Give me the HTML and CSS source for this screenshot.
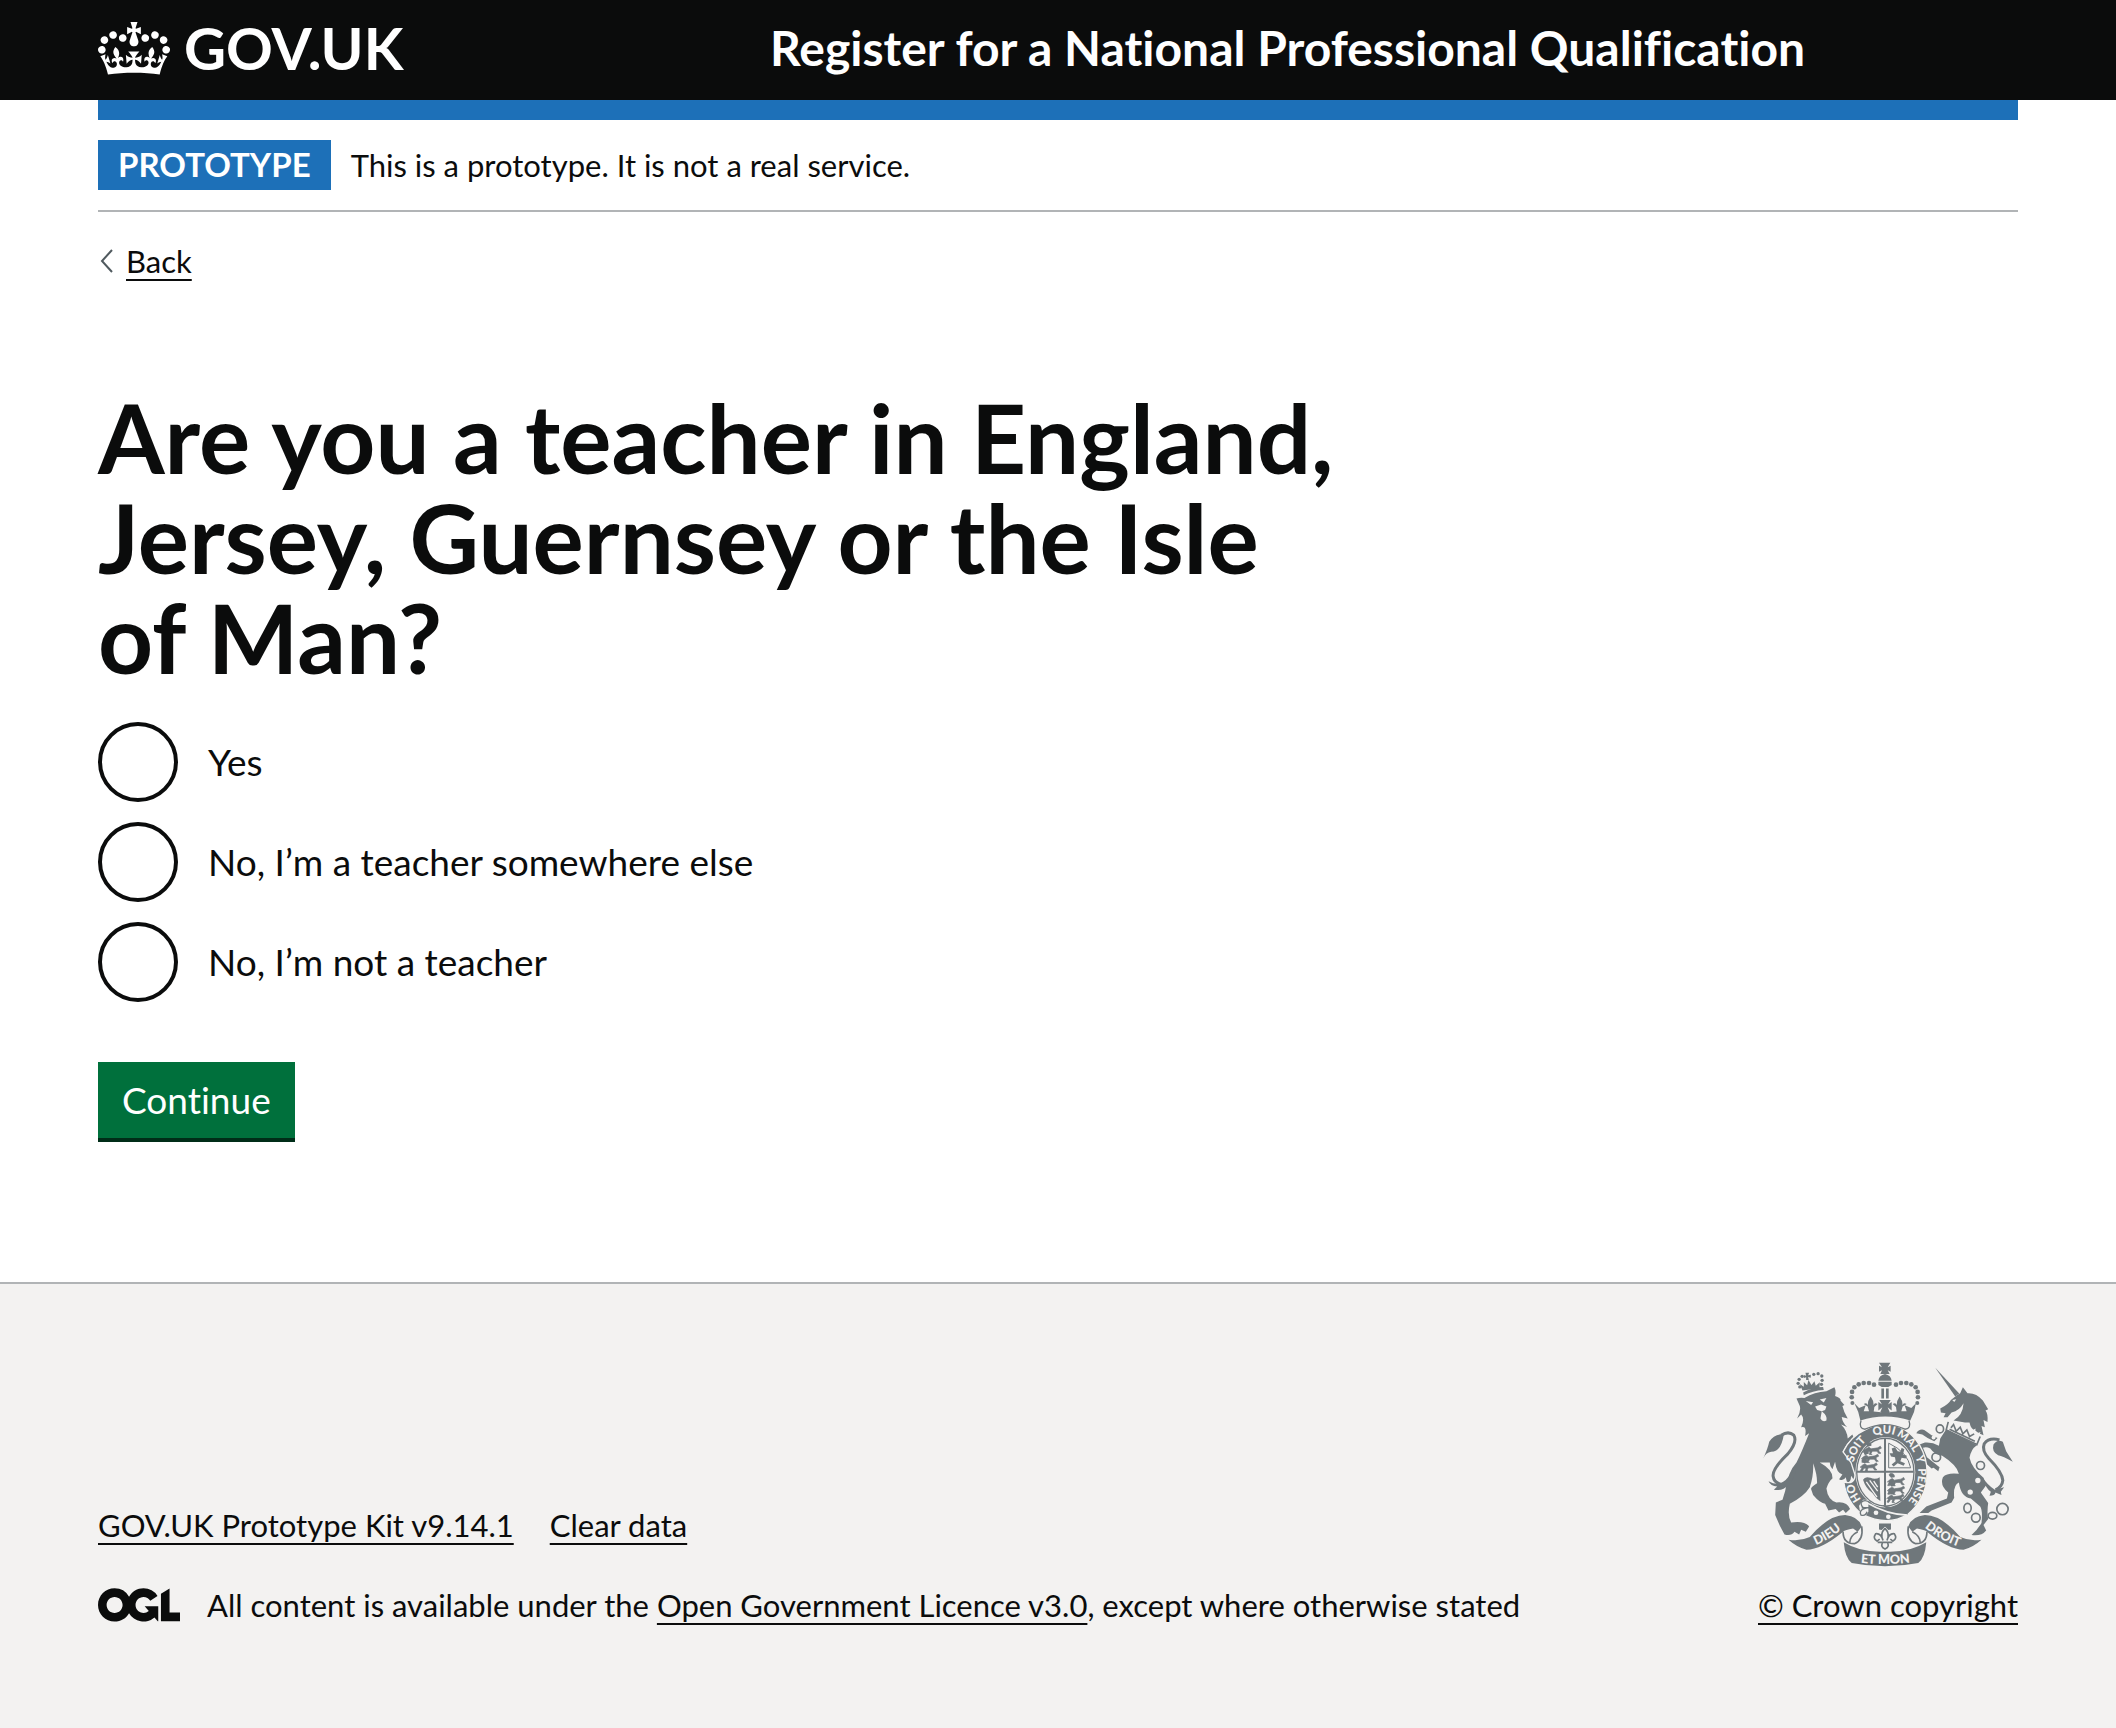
FILE: index.html
```html
<!DOCTYPE html>
<html lang="en">
<head>
<meta charset="utf-8">
<meta name="viewport" content="width=device-width, initial-scale=1">
<title>Are you a teacher in England, Jersey, Guernsey or the Isle of Man?</title>
<link rel="stylesheet" href="styles.css">
</head>
<body>
<header class="header">
  <div class="container header-row">
    <a class="logo" href="#">
      <svg class="logo-crown" viewBox="0 0 132 97" aria-hidden="true"><path fill="currentColor" fill-rule="evenodd" d="M25 30.2c3.5 1.5 7.7-.2 9.1-3.7 1.5-3.6-.2-7.8-3.9-9.2-3.6-1.4-7.6.3-9.1 3.9-1.4 3.5.3 7.5 3.9 9zM9 39.5c3.6 1.5 7.8-.2 9.2-3.7 1.5-3.6-.2-7.8-3.9-9.1-3.6-1.5-7.6.2-9.1 3.8-1.4 3.5.3 7.5 3.8 9zM4.4 57.2c3.5 1.5 7.7-.2 9.1-3.8 1.5-3.6-.2-7.7-3.9-9.1-3.5-1.5-7.6.3-9.1 3.8-1.4 3.5.3 7.6 3.9 9.1zm38.3-21.4c3.5 1.5 7.7-.2 9.1-3.8 1.5-3.6-.2-7.7-3.9-9.1-3.6-1.5-7.6.3-9.1 3.8-1.3 3.6.4 7.7 3.9 9.1zm64.4-5.6c-3.6 1.5-7.8-.2-9.1-3.7-1.5-3.6.2-7.8 3.8-9.2 3.6-1.4 7.7.3 9.2 3.9 1.3 3.5-.4 7.5-3.9 9zm15.9 9.3c-3.6 1.5-7.7-.2-9.1-3.7-1.5-3.6.2-7.8 3.7-9.1 3.6-1.5 7.7.2 9.2 3.8 1.5 3.5-.3 7.5-3.8 9zm4.7 17.7c-3.6 1.5-7.8-.2-9.2-3.8-1.5-3.6.2-7.7 3.9-9.1 3.6-1.5 7.7.3 9.2 3.8 1.3 3.5-.4 7.6-3.9 9.1zM89.3 35.8c-3.6 1.5-7.8-.2-9.2-3.8-1.4-3.6.2-7.7 3.9-9.1 3.6-1.5 7.7.3 9.2 3.8 1.4 3.6-.3 7.7-3.9 9.1zM69.7 17.7l8.9 4.7V9.3l-8.9 2.8c-.2-.3-.5-.6-.9-.9L72.4 0H59.6l3.5 11.2c-.3.3-.6.5-.9.9l-8.8-2.8v13.1l8.8-4.7c.3.3.6.7.9.9l-5 15.4v.1c-.2.8-.4 1.6-.4 2.4 0 4.1 3.1 7.5 7 8.1h.2c.3 0 .7.1 1 .1.4 0 .7 0 1-.1h.2c4-.6 7.1-4.1 7.1-8.1 0-.8-.1-1.7-.4-2.4V34l-5.1-15.4c.4-.2.7-.6 1-.9zM66 92.8c16.9 0 32.8 1.1 47.1 3.2 4-16.9 8.9-26.7 14-33.5l-9.6-3.4c1 4.9 1.1 7.2 0 10.2-1.5-1.4-3-4.3-4.2-8.7L108.6 76c2.8-2 5-3.2 7.5-3.3-4.4 9.4-10 11.9-13.6 11.2-4.3-.8-6.3-4.6-5.6-7.9 1-4.7 5.7-5.9 8-.5 4.3-8.7-3-11.4-7.6-8.8 7.1-7.2 7.9-13.5 2.1-21.1-8 6.1-8.1 12.3-4.5 20.8-4.7-5.4-12.1-2.5-9.5 6.2 3.4-5.2 7.9-2 7.2 3.1-.6 4.3-6.4 7.8-13.5 7.2-10.3-.9-10.9-8-11.2-13.8 2.5-.5 7.1 1.8 11 7.3L80.2 60c-4.1 4.4-8 5.3-12.3 5.4 1.4-4.4 8-11.6 8-11.6H55.5s6.4 7.2 7.9 11.6c-4.2-.1-8-1-12.3-5.4l1.4 16.4c3.9-5.5 8.5-7.7 10.9-7.3-.3 5.8-.9 12.8-11.1 13.8-7.2.6-12.9-2.9-13.5-7.2-.7-5 3.8-8.3 7.1-3.1 2.7-8.7-4.6-11.6-9.4-6.2 3.7-8.5 3.6-14.7-4.6-20.8-5.8 7.6-5 13.9 2.2 21.1-4.7-2.6-11.9.1-7.7 8.8 2.3-5.5 7.1-4.2 8.1.5.7 3.3-1.3 7.1-5.7 7.9-3.5.7-9-1.8-13.5-11.2 2.5.1 4.7 1.3 7.5 3.3l-4.7-15.4c-1.2 4.4-2.7 7.2-4.3 8.7-1.1-3-.9-5.3 0-10.2l-9.5 3.4c5 6.9 9.9 16.7 14 33.5 14.8-2.1 30.8-3.2 47.7-3.2z"/></svg>
      <span>GOV.UK</span>
    </a>
    <a class="service-name" href="#">Register for a National Professional Qualification</a>
  </div>
</header>

<div class="container">
  <div class="blue-bar"></div>
  <div class="phase-banner">
    <strong class="tag">PROTOTYPE</strong>
    <span>This is a prototype. It is not a real service.</span>
  </div>
  <a class="back-link" href="#">
    <svg class="back-arrow" viewBox="0 0 16 24" aria-hidden="true"><path d="M14 1 4 12l10 11" fill="none" stroke="currentColor" stroke-width="2"/></svg>
    <span class="link">Back</span>
  </a>
  <main class="main">
    <form>
      <fieldset class="fieldset">
        <legend class="legend"><h1 class="heading">Are you a teacher in England, Jersey, Guernsey or the Isle of Man?</h1></legend>
        <div class="radios">
          <div class="radio-item"><input class="radio" type="radio" id="yes" name="teacher"><label for="yes">Yes</label></div>
          <div class="radio-item"><input class="radio" type="radio" id="elsewhere" name="teacher"><label for="elsewhere">No, I’m a teacher somewhere else</label></div>
          <div class="radio-item"><input class="radio" type="radio" id="no" name="teacher"><label for="no">No, I’m not a teacher</label></div>
        </div>
      </fieldset>
      <button class="button" type="button">Continue</button>
    </form>
  </main>
</div>

<footer class="footer">
  <div class="container footer-row">
    <div class="footer-meta">
      <nav class="footer-links"><a class="link" href="#">GOV.UK Prototype Kit v9.14.1</a><a class="link" href="#">Clear data</a></nav>
      <div class="licence">
        <svg class="ogl" viewBox="0 0 483 196" aria-hidden="true"><path fill="currentColor" d="M421.5 142.8V.1l-50.7 32.3v161.1h112.4v-50.7zm-122.3-9.6A47.12 47.12 0 0 1 221 97.8c0-26 21.1-47.1 47.1-47.1 16.7 0 31.4 8.7 39.7 21.8l42.7-27.2A97.63 97.63 0 0 0 268.1 0c-36.5 0-68.3 20.1-85.1 49.7A98 98 0 0 0 97.8 0C43.9 0 0 43.9 0 97.8s43.9 97.8 97.8 97.8c36.5 0 68.3-20.1 85.1-49.7a97.76 97.76 0 0 0 149.6 25.4l19.4 22.2h3v-87.8h-80l24.3 27.5zM97.8 145c-26 0-47.1-21.1-47.1-47.1s21.1-47.1 47.1-47.1 47.1 21.1 47.1 47.1S123.8 145 97.8 145"/></svg>
        <span>All content is available under the <a class="link" href="#">Open Government Licence v3.0</a>, except where otherwise stated</span>
      </div>
    </div>
    <div class="copyright">
      <svg class="crest" viewBox="66 70 750 616" aria-hidden="true">
        <defs>
          <path id="garter-line" d="M433 521A99 118 0 0 1 433 285A99 118 0 0 1 433 521"/>
          <path id="dieu-line" d="M208 626Q268 606 314 561"/>
          <path id="mon-line" d="M340 671Q433 684 526 670"/>
          <path id="droit-line" d="M543 560Q594 606 664 628"/>
          <path id="passant" d="M0 4l8-4 6 5 20-3 8-5 3 6-8 4 1 6 6 5-7 1-5-7-14 0-4 7 3 3-8 0 2-9-6 0-6 9-5-1 4-8-2-4-3 2zM6-2q-14-10-2-14 12 2 10 12"/>
        </defs>
        <!-- lion -->
        <g class="ink">
          <path d="M186 162Q212 145 246 145L248 154Q214 156 188 170z"/>
          <path d="M184 156l-8-20 12 8 0-14 10 10 4-16 9 15 9-11 4 13 12-10-1 18z"/>
          <path d="M193 102h11l-3 8 8-2v9l-8-2 2 9h-8v-8l-7 2v-9l7 2z"/>
          <circle cx="171" cy="134" r="5"/><circle cx="174" cy="122" r="5"/><circle cx="183" cy="113" r="5"/><circle cx="218" cy="107" r="5"/><circle cx="231" cy="105" r="5"/><circle cx="242" cy="112" r="5"/><circle cx="243" cy="125" r="5"/><circle cx="176" cy="145" r="5"/><circle cx="241" cy="137" r="5"/>
          <path d="M166 180Q176 176 190 178Q220 160 256 158L280 146Q286 158 282 172Q302 180 298 186L310 199L304 202Q308 220 320 240L302 235Q304 252 318 265L300 258Q318 276 320 300L334 288L338 298Q316 312 305 340L330 366Q344 388 340 426L330 412Q330 432 318 432L314 416Q306 430 294 422L304 408Q286 404 282 370L274 392Q266 384 266 372L236 372Q276 394 274 420Q262 430 256 450Q260 484 286 492Q318 488 327 512L314 524L306 514L294 522L284 512L262 516L252 496Q238 496 216 470L210 452Q208 446 228 434Q228 406 216 374Q218 412 206 446Q190 472 146 496Q138 530 150 552Q190 546 204 564L194 580L180 574L174 588L160 580Q150 594 130 588L116 562L102 530L104 492L124 484L132 458Q140 400 166 372Q182 340 204 284L192 292Q198 260 180 266Q192 240 180 228L168 240Q180 218 176 202z"/>
          <path d="M66 360Q80 330 84 310Q100 284 128 288Q120 340 90 340Q74 342 66 360z"/>
          <path d="M82 428Q108 442 126 430Q140 422 166 380Q162 424 140 440Q126 458 98 454L108 444Q88 442 82 428z"/>
        </g>
        <path class="line" stroke-width="9" d="M120 290Q142 276 158 290Q170 310 140 346Q92 392 96 414Q98 432 120 438"/>
        <path class="paper" d="M194 187l22 4-6 8zM236 183l20-5-8 14zM222 204l18-6 16 6-4 10-10 4q18 14 14 28-12 6-18-6l4-22-14-4z"/>
        <!-- unicorn -->
        <g class="ink">
          <path d="M583 87l72 78-12 9z"/>
          <path d="M598 210Q624 196 630 184L648 170L658 164L666 146L680 164Q706 162 726 186L742 212L734 216Q742 226 740 250L728 244L732 266L722 262L728 290L714 284L706 278Q690 274 686 252L672 252L638 246Q666 230 668 194Q656 216 632 222L620 236L608 236L614 224L600 222z"/>
          <path d="M616 272L708 320Q690 332 686 358Q692 388 728 418L736 440L720 462L742 494Q738 522 742 542L728 560L736 576Q722 594 692 590Q710 574 722 554Q726 516 718 504L690 480Q660 476 654 432Q636 440 640 478L632 492L572 516L562 524L536 524L556 504L618 480L622 462Q596 442 606 416Q618 402 654 406Q648 380 604 352Q582 350 568 330Q556 324 546 328L558 356L596 386L592 398L578 388L572 390L556 376L538 344L530 320L552 312Q574 310 594 322L598 300z"/>
          <path d="M526 284Q534 270 550 274L572 290L590 298L580 308L560 298L544 288z"/>
          <path d="M758 318Q770 300 786 310L796 338L816 370Q786 352 772 350Q752 340 758 318z"/>
          <path d="M726 418Q740 440 762 454L790 446L780 460L782 470L764 462Q762 472 746 472L750 460Q734 450 726 418z"/>
        </g>
        <path class="line" stroke-width="9" d="M776 304Q744 296 730 316Q722 336 744 360Q784 400 786 426Q784 446 764 454"/>
        <path class="paper" d="M626 246l12 12 8-10 6 18 14-14 2 20 16-12 2 20 18-10-1 16 16-6-10 26-92-46z"/>
        <path class="line" stroke-width="5" d="M622 250l-6 24 92 44 10-24M630 268l8-10 8 20 12-12 8 20 12-12 8 20 14-8M626 272l76 36"/>
        <circle class="paper" cx="711" cy="426" r="8"/><circle class="paper" cx="688" cy="461" r="8"/><circle class="paper" cx="578" cy="297" r="6"/><path class="paper" d="M634 184l12-2-6 8z"/>
        <g class="line" stroke-width="5"><ellipse cx="597" cy="271" rx="11" ry="12"/><circle cx="586" cy="356" r="13"/><circle cx="719" cy="381" r="12"/><ellipse cx="680" cy="509" rx="11" ry="14"/><circle cx="705" cy="538" r="13"/><ellipse cx="755" cy="532" rx="13" ry="10"/><circle cx="785" cy="512" r="17"/></g>
        <!-- crown -->
        <g class="ink">
          <path d="M414 72h34l-8 14 9-5v18l-9-4 6 11h-28l5-11-9 4V81l9 5z"/>
          <path d="M412 126Q414 110 432 106Q450 110 452 126zM412 129h40v10l-10 6h-20l-10-6zM421 150h8v30h-8zM435 150h8v30h-8zM415 184l34 0-8 14 11-8v26l-12-10 6 14h-28l6-14-12 10v-26l11 8z"/>
          <path d="M340 194l14 14 20-8-6 18 16 0-4-14-12-8q10-6 12 4 0-14 9-26 9 12 9 26 2-10 12-4l-10 9-2 14 22 2 13-8 12 8 22-2-2-14-10-9q10-6 12 4 0-14 9-26 9 12 9 26 2-10 12-4l-12 8-4 14 16 0-6-18 20 8 14-14Q522 220 508 246Q432 222 358 246Q354 220 340 194z"/>
          <circle cx="334" cy="193" r="6"/><circle cx="332" cy="176" r="7"/><circle cx="333" cy="160" r="7"/><circle cx="340" cy="146" r="7"/><circle cx="353" cy="137" r="7"/><circle cx="368" cy="133" r="7"/><circle cx="384" cy="133" r="7"/><circle cx="399" cy="138" r="7"/>
          <circle cx="529" cy="193" r="6"/><circle cx="531" cy="176" r="7"/><circle cx="530" cy="160" r="7"/><circle cx="524" cy="146" r="7"/><circle cx="511" cy="137" r="7"/><circle cx="496" cy="133" r="7"/><circle cx="480" cy="133" r="7"/><circle cx="465" cy="138" r="7"/>
        </g>
        <!-- garter and shield -->
        <path class="ink edge" stroke-width="4" d="M372 274A128 148 0 0 1 492 274A128 148 0 0 1 500 528Q440 566 364 528A128 148 0 0 1 308 430Q340 440 342 410L330 372L306 340A128 148 0 0 1 372 274z"/>
        <path class="line" stroke-width="4" d="M360 246Q352 270 372 272Q432 244 492 272Q512 270 504 246"/>
        <ellipse class="paper" cx="433" cy="401" rx="90" ry="106"/>
        <ellipse class="line" cx="433" cy="401" rx="86" ry="102" stroke-width="4"/>
        <path class="line" stroke-width="6" d="M432 300v202M348 400h170"/>
        <g class="ink">
          <g class="line-ink" stroke-width="2">
            <use href="#passant" x="376" y="326"/><use href="#passant" x="368" y="350"/><use href="#passant" x="364" y="376"/>
            <use href="#passant" x="446" y="420"/><use href="#passant" x="446" y="446"/><use href="#passant" x="444" y="470"/>
          </g>
          <path d="M452 330l10-4 8 12 8 2 4-12 8 4-4 16 12 4-4 8-12-2-4 10 14 6-4 8-18-8-12 10-6-6 12-10-2-12-12-2-4-10 10 0z"/>
          <path d="M366 424Q372 412 388 418Q404 424 416 416L418 488Q404 480 394 464Q374 450 366 424z"/>
          <path d="M424 500L460 508L494 482L500 530Q440 520 424 500z"/>
        </g>
        <path class="line" stroke-width="3" d="M443 314v74h66Q500 340 443 314"/>
        <path class="cut" stroke-width="4" d="M376 430l32 46M386 426l24 32M398 428l12 18"/>
        <path class="cut" stroke-width="5" d="M372 490Q440 530 500 530"/>
        <path class="paper" d="M382 484l-16 0-12 18 4 24 14 8 10-14z"/>
        <path class="line" stroke-width="4" d="M388 494Q372 480 360 492Q360 506 372 510Q352 516 360 530Q374 534 378 520M362 508h26"/>
        <circle class="paper" cx="405" cy="523" r="7"/><circle class="paper" cx="442" cy="535" r="7"/>
        <g class="crest-text">
          <text><textPath href="#garter-line" startOffset="112">HO</textPath></text>
          <text><textPath href="#garter-line" startOffset="240">SOIT</textPath></text>
          <text><textPath href="#garter-line" startOffset="337">QUI</textPath></text>
          <text><textPath href="#garter-line" startOffset="412">MAL</textPath></text>
          <text><textPath href="#garter-line" startOffset="473">Y</textPath></text>
          <text><textPath href="#garter-line" startOffset="551">PENSE</textPath></text>
        </g>
        <!-- fleur-de-lis and scroll -->
        <path class="ink" d="M414 555h36v18l-8 2-10-10-10 10-8-2z"/>
        <path class="line" stroke-width="5" d="M432 570Q416 586 426 606Q420 584 404 586Q394 600 408 608L416 602M432 570Q448 586 438 606Q444 584 460 586Q470 600 456 608L448 602M410 612h44M424 614q-6 12 8 18q14-6 8-18"/>
        <g class="ink">
          <path d="M142 604Q176 610 206 596Q262 530 312 530Q352 534 362 564L350 580L336 570Q312 574 306 580Q240 634 196 634Q166 626 142 604z"/>
          <path d="M722 604Q688 610 658 596Q602 530 552 530Q512 534 502 564L514 580L528 570Q552 574 558 580Q624 634 668 634Q698 626 722 604z"/>
          <path d="M308 612Q360 644 432 640Q504 644 556 612Q552 660 532 674Q432 694 332 674Q312 660 308 612z"/>
        </g>
        <path class="line" stroke-width="5" d="M306 580Q306 616 340 616Q368 606 362 564M350 580Q326 592 326 614M558 580Q558 616 524 616Q496 606 502 564M514 580Q538 592 538 614"/>
        <g class="crest-text crest-motto">
          <text><textPath href="#dieu-line" startOffset="50%">DIEU</textPath></text>
          <text><textPath href="#mon-line" startOffset="50%">ET MON</textPath></text>
          <text><textPath href="#droit-line" startOffset="50%">DROIT</textPath></text>
        </g>
      </svg>
      <a class="link" href="#">© Crown copyright</a>
    </div>
  </div>
</footer>
</body>
</html>
```
FILE: styles.css
```css
* { box-sizing: border-box; }

html { background: #f3f2f1; }

body {
  margin: 0;
  background: #fff;
  color: #0b0c0c;
  font-family: Lato, "Liberation Sans", sans-serif;
  font-size: 31px;
  font-variant-ligatures: none;
  line-height: 40px;
}

.container { margin: 0 98px; }

.header { background: #0b0c0c; color: #fff; }

.header-row {
  display: grid;
  grid-template-columns: 35% 1fr;
  align-items: center;
  height: 100px;
  padding-bottom: 4px;
}

.logo {
  display: flex;
  align-items: center;
  gap: 14px;
  color: #fff;
  font-size: 58px;
  font-weight: 700;
  line-height: 60px;
  text-decoration: none;
}

.logo-crown { width: 72px; height: 53px; }

.service-name {
  color: #fff;
  font-size: 48px;
  font-weight: 700;
  line-height: 60px;
  text-decoration: none;
}

.blue-bar { height: 20px; background: #1d70b8; }

.phase-banner {
  display: flex;
  align-items: center;
  gap: 20px;
  padding: 20px 0;
  border-bottom: 2px solid #b1b4b6;
}

.tag {
  padding: 4px 20px 6px;
  background: #1d70b8;
  color: #fff;
  font-size: 33px;
}

.back-link {
  display: inline-flex;
  align-items: center;
  gap: 12px;
  margin-top: 29px;
  color: inherit;
  text-decoration: none;
}

.back-arrow { width: 16px; height: 24px; color: #505a5f; }

.link {
  color: inherit;
  text-decoration: underline;
  text-decoration-thickness: 2px;
  text-decoration-skip-ink: none;
  text-underline-offset: 6px;
}

.main { padding: 106px 0 140px; }

.fieldset { margin: 0; padding: 0; border: 0; }

.legend { width: 66%; padding: 0; }

.heading {
  margin: 0 0 35px;
  font-size: 96px;
  font-weight: 700;
  line-height: 100px;
}

.radios {
  display: flex;
  flex-direction: column;
  gap: 20px;
  margin-bottom: 60px;
  font-size: 37px;
}

.radio-item { display: flex; align-items: center; gap: 30px; }

.radio {
  appearance: none;
  width: 80px;
  height: 80px;
  margin: 0;
  border: 4px solid #0b0c0c;
  border-radius: 50%;
  background: #fff;
}

.radio:checked { box-shadow: inset 0 0 0 16px #fff; background: #0b0c0c; }

.button {
  display: block;
  height: 80px;
  padding: 0 24px 4px;
  border: 0;
  background: #00703c;
  box-shadow: inset 0 -4px 0 #002d18;
  color: #fff;
  font: inherit;
  font-size: 37px;
}

.footer {
  padding: 78px 0 100px;
  border-top: 2px solid #b1b4b6;
  background: #f3f2f1;
}

.footer-row {
  display: flex;
  align-items: flex-end;
  justify-content: space-between;
}

.footer-meta { display: flex; flex-direction: column; gap: 40px; }

.footer-links { display: flex; gap: 36px; }

.licence { display: flex; align-items: center; gap: 27px; }

.ogl { width: 82px; height: 34px; }

.copyright {
  display: flex;
  flex-direction: column;
  align-items: center;
  gap: 18px;
}

.crest { width: 250px; height: 205px; }

.ink { fill: #6f777b; }

.paper { fill: #f3f2f1; }

.line { fill: none; stroke: #6f777b; }

.line-ink { stroke: #6f777b; }

.cut { fill: none; stroke: #f3f2f1; }

.edge { stroke: #f3f2f1; }

.crest-text {
  fill: #f3f2f1;
  font-size: 34px;
  font-weight: 900;
  text-anchor: middle;
}

.crest-motto { font-size: 38px; }
```
